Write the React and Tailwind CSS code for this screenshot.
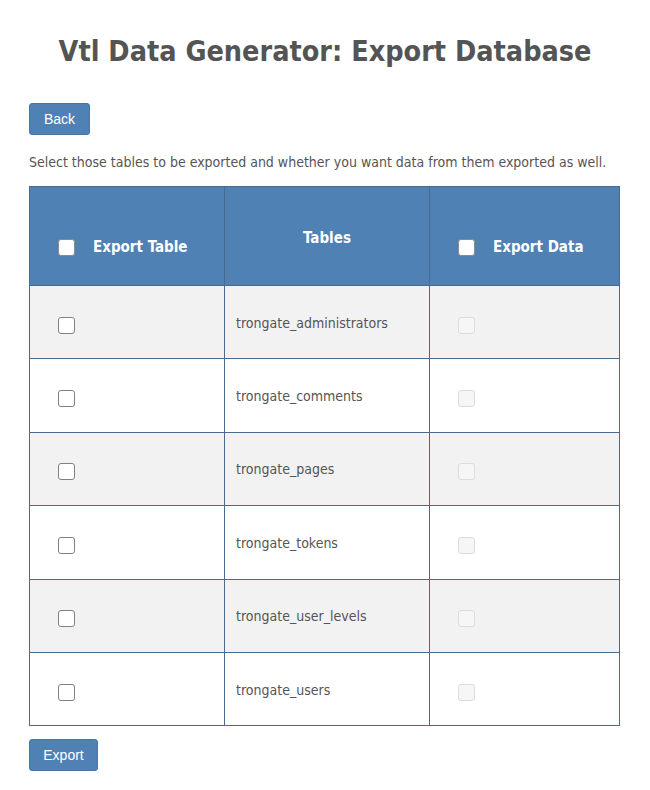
import React, { useState } from 'react';

const tables = [
  'trongate_administrators',
  'trongate_comments',
  'trongate_pages',
  'trongate_tokens',
  'trongate_user_levels',
  'trongate_users',
];

const Box = ({ checked, disabled, onClick, header }) => (
  <span
    onClick={disabled ? undefined : onClick}
    className={`inline-flex items-center justify-center w-[17px] h-[17px] rounded-[3px] border ${
      disabled
        ? 'border-[#dcdcdc] bg-[#f6f6f6]'
        : header
        ? 'border-[#8a8a8a] bg-white'
        : 'border-[#808080] bg-white cursor-pointer'
    }`}
  >
    {checked && (
      <svg viewBox="0 0 12 12" className="w-[11px] h-[11px]">
        <path d="M2 6.5l2.5 2.5L10 3" fill="none" stroke="#333" strokeWidth="2" />
      </svg>
    )}
  </span>
);

export default function App() {
  const [sel, setSel] = useState({});

  return (
    <div className="w-[650px] min-h-[790px] bg-white text-[#555] font-['DejaVu_Sans_Condensed','DejaVu_Sans',sans-serif]">
      <h1 className="pt-[30px] text-center text-[28.5px] font-bold text-[#545454] leading-[44px]">
        Vtl Data Generator: Export Database
      </h1>

      <div className="px-[29px]">
        <button className="mt-[29px] h-[32px] w-[61px] rounded-[3px] bg-[#4f81b5] text-white text-[14px] font-['Liberation_Sans',sans-serif] border border-[#4675a6]">
          Back
        </button>

        <p className="mt-[17px] text-[14px] leading-[20px] text-[#555]">
          Select those tables to be exported and whether you want data from them exported as well.
        </p>

        <table className="mt-[14px] w-[590px] border-collapse table-fixed">
          <thead>
            <tr className="bg-[#4f81b5] text-white h-[99px]">
              <th className="w-[195px] border border-[#4a6a8f] text-left align-middle pl-[28px] pt-[22px]">
                <div className="flex items-center gap-[18px] text-[15px] font-bold">
                  <Box header />
                  Export Table
                </div>
              </th>
              <th className="w-[205px] border border-[#4a6a8f] text-center align-middle pt-[4px] text-[15px] font-bold">
                Tables
              </th>
              <th className="w-[190px] border border-[#4a6a8f] text-left align-middle pl-[28px] pt-[22px]">
                <div className="flex items-center gap-[18px] text-[15px] font-bold">
                  <Box header />
                  Export Data
                </div>
              </th>
            </tr>
          </thead>
          <tbody>
            {tables.map((t, i) => (
              <tr key={t} className={`h-[73.4px] ${i % 2 === 0 ? 'bg-[#f2f2f2]' : 'bg-white'}`}>
                <td className="border border-[#4a6a8f] pl-[28px] pt-[6px] align-middle">
                  <div className="flex">
                    <Box checked={!!sel[t]} onClick={() => setSel({ ...sel, [t]: !sel[t] })} />
                  </div>
                </td>
                <td className="border border-[#4a6a8f] pl-[11px] pt-[2px] align-middle text-[14px] text-[#555]">
                  {t}
                </td>
                <td className="border border-[#4a6a8f] pl-[28px] pt-[6px] align-middle">
                  <div className="flex">
                    <Box disabled />
                  </div>
                </td>
              </tr>
            ))}
          </tbody>
        </table>

        <button className="mt-[13px] h-[32px] w-[69px] rounded-[3px] bg-[#4f81b5] text-white text-[14px] font-['Liberation_Sans',sans-serif] border border-[#4675a6]">
          Export
        </button>
      </div>
    </div>
  );
}
